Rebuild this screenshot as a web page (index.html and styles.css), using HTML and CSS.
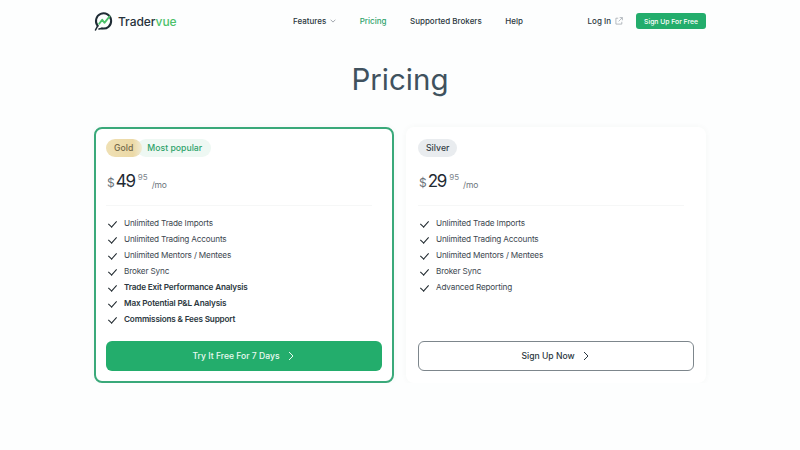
FILE: index.html
```html
<!DOCTYPE html>
<html lang="en">
<head>
  <meta charset="UTF-8">
  <title>Pricing - Tradervue</title>
  <link rel="stylesheet" href="styles.css">
</head>
<body>
  <header class="topbar">
    <a class="logo" href="#">
      <svg class="logo-mark" width="20" height="20" viewBox="0 0 20 20" fill="none">
        <path d="M3.700 14.800A7.600 7.600 0 1 1 8 17.400" stroke="#1f2c35" stroke-width="2" stroke-linecap="round"/>
        <path d="M3.700 14.800 1.500 19" stroke="#1f2c35" stroke-width="1.600" stroke-linecap="round"/>
        <path d="M8 17.400 5 18" stroke="#1f2c35" stroke-width="1.600" stroke-linecap="round"/>
        <path d="M5.200 12.800 8.200 8.800l2.200 3L15.500 5.500" stroke="#4cc26a" stroke-width="1.900" stroke-linecap="round" stroke-linejoin="round"/>
      </svg>
      <span class="logo-text">Trader<span class="logo-accent">vue</span></span>
    </a>
    <nav class="nav">
      <a href="#">Features
        <svg class="caret" width="6" height="4" viewBox="0 0 6 4" fill="none"><path d="M.6.700 3 3.100 5.400.700" stroke="#8a9299" stroke-width=".8"/></svg>
      </a>
      <a class="active" href="#">Pricing</a>
      <a href="#">Supported Brokers</a>
      <a href="#">Help</a>
    </nav>
    <div class="account">
      <a class="login" href="#">Log In
        <svg width="8" height="8" viewBox="0 0 8 8" fill="none"><path d="M3.200 1.200H.9v5.900h5.900V4.800M4.700.6h2.700v2.700M7.300.7 3.600 4.400" stroke="#9aa1a7" stroke-width=".7"/></svg>
      </a>
      <a class="signup" href="#">Sign Up For Free</a>
    </div>
  </header>

  <main class="page">
    <h1>Pricing</h1>
    <div class="plans">
      <section class="plan featured">
        <div class="badges">
          <span class="badge gold">Gold</span>
          <span class="badge popular">Most popular</span>
        </div>
        <div class="price"><span class="currency">$</span><span class="amount">49</span><sup>95</sup><span class="period">/mo</span></div>
        <ul class="features">
          <li>Unlimited Trade Imports</li>
          <li>Unlimited Trading Accounts</li>
          <li>Unlimited Mentors / Mentees</li>
          <li>Broker Sync</li>
          <li class="strong">Trade Exit Performance Analysis</li>
          <li class="strong">Max Potential P&amp;L Analysis</li>
          <li class="strong">Commissions &amp; Fees Support</li>
        </ul>
        <a class="cta primary" href="#">Try It Free For 7 Days
          <svg width="6" height="10" viewBox="0 0 6 10" fill="none"><path d="M1 1l4 4-4 4" stroke="currentColor" stroke-width="1"/></svg>
        </a>
      </section>

      <section class="plan">
        <div class="badges">
          <span class="badge silver">Silver</span>
        </div>
        <div class="price"><span class="currency">$</span><span class="amount">29</span><sup>95</sup><span class="period">/mo</span></div>
        <ul class="features">
          <li>Unlimited Trade Imports</li>
          <li>Unlimited Trading Accounts</li>
          <li>Unlimited Mentors / Mentees</li>
          <li>Broker Sync</li>
          <li>Advanced Reporting</li>
        </ul>
        <a class="cta outline" href="#">Sign Up Now
          <svg width="6" height="10" viewBox="0 0 6 10" fill="none"><path d="M1 1l4 4-4 4" stroke="currentColor" stroke-width="1"/></svg>
        </a>
      </section>
    </div>
  </main>
</body>
</html>
```

FILE: styles.css
```css
* {
  box-sizing: border-box;
}

body {
  margin: 0;
  background-color: #fdfefe;
  font-family: Inter, "Open Sans", sans-serif;
  color: #2b3740;
  overflow: hidden;
}

a {
  color: inherit;
  text-decoration: none;
}

.topbar {
  display: flex;
  align-items: center;
  width: 612px;
  height: 42px;
  margin: 0 auto;
}

.logo {
  display: flex;
  align-items: center;
  gap: 4px;
  width: 199px;
}

.logo-text {
  font-size: 12px;
  font-weight: 500;
  letter-spacing: -0.05px;
  color: #26323b;
}

.logo-accent {
  color: #4cc26a;
}

.nav {
  display: flex;
  align-items: center;
  gap: 23.500px;
  font-size: 8px;
  font-weight: 500;
}

.nav a {
  display: flex;
  align-items: center;
  gap: 4px;
}

.nav .active {
  color: #2fa36b;
}

.account {
  display: flex;
  align-items: center;
  margin-left: auto;
  font-size: 8px;
  font-weight: 500;
}

.login {
  display: flex;
  align-items: center;
  gap: 4px;
  margin-right: 13px;
}

.signup {
  display: flex;
  align-items: center;
  justify-content: center;
  width: 70px;
  height: 16px;
  border-radius: 3px;
  background-color: #23ad6c;
  color: #fff;
  font-size: 6.800px;
}

.page {
  width: 612px;
  margin: 0 auto;
}

h1 {
  margin: 0;
  padding-top: 17px;
  height: 85px;
  font-size: 29.500px;
  line-height: 40px;
  font-weight: 400;
  text-align: center;
  color: #40525e;
}

.plans {
  display: grid;
  grid-template-columns: 300px 300px;
  gap: 12px;
}

.plan {
  display: flex;
  flex-direction: column;
  height: 256px;
  padding: 10px;
  border: 2px solid transparent;
  border-radius: 8px;
  background-color: #fff;
  box-shadow: 0 0 6px rgba(40, 70, 60, 0.04);
}

.plan.featured {
  border-color: #3aa97a;
}

.badges {
  display: flex;
  height: 18px;
}

.badge {
  display: block;
  line-height: 18px;
  border-radius: 9px;
  font-size: 8.700px;
  font-weight: 500;
}

.gold {
  position: relative;
  padding: 0 9px 0 8px;
  background: linear-gradient(90deg, #efe0b4, #ecd9a6 75%, #f0ebd4);
  color: #74694a;
}

.popular {
  margin-left: -5px;
  padding: 0 9px 0 10px;
  background-color: #eef8f3;
  color: #2fa36b;
}

.silver {
  padding: 0 8px;
  background-color: #e9ecef;
  color: #333d45;
}

.price {
  display: flex;
  align-items: flex-start;
  height: 49px;
  padding-top: 14px;
  border-bottom: 1px solid #f6f7f7;
  margin: 0 10px 9px 0;
}

.currency {
  margin: 4px 0 0 1px;
  font-size: 12px;
  line-height: 16px;
  color: #6b747b;
}

.amount {
  margin-left: 1px;
  font-size: 17px;
  line-height: 20px;
  letter-spacing: -1.200px;
  color: #1f2a32;
}

.price sup {
  margin-left: 3px;
  font-size: 8px;
  line-height: 12px;
  color: #7b848b;
}

.period {
  margin: 9px 0 0 4px;
  font-size: 8.500px;
  line-height: 11px;
  letter-spacing: -0.2px;
  color: #6b747b;
}

.features {
  flex: 1;
  margin: 0;
  padding: 0;
  list-style: none;
  font-size: 8.200px;
  letter-spacing: -0.17px;
  color: #3d4750;
}

.features li {
  position: relative;
  height: 16px;
  line-height: 16px;
  padding-left: 18px;
}

/* check mark drawn with two borders */
.features li::before {
  content: "";
  position: absolute;
  left: 4px;
  top: 3.500px;
  width: 4px;
  height: 7px;
  border-right: 1.500px solid #1d262c;
  border-bottom: 1.500px solid #1d262c;
  transform: rotate(42deg);
}

.features .strong {
  font-weight: 600;
  color: #2b3740;
}

.cta {
  display: flex;
  align-items: center;
  justify-content: center;
  gap: 8px;
  height: 30px;
  border-radius: 6px;
  font-size: 8.600px;
  font-weight: 500;
  padding-right: 2px;
}

.primary {
  background-color: #23ad6c;
  color: #eafaf2;
}

.outline {
  border: 1px solid #7d868c;
  color: #2b3740;
}
```
